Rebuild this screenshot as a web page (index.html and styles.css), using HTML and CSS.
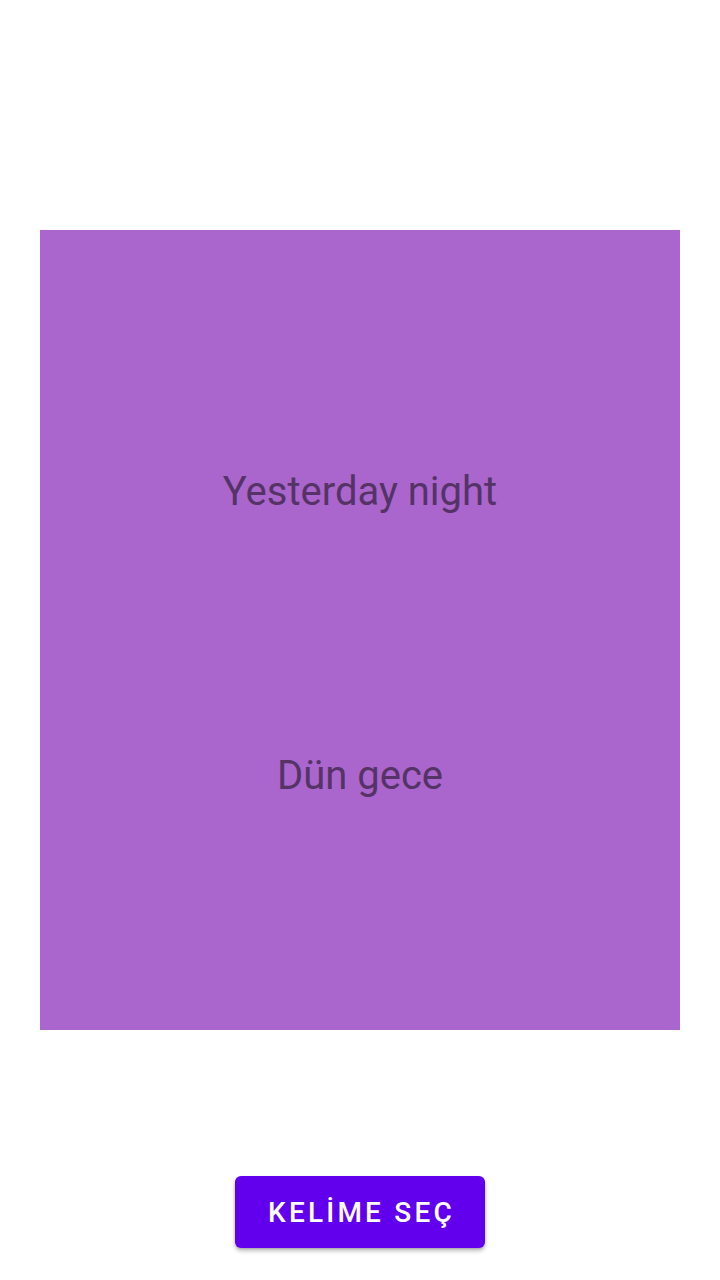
FILE: index.html
```html
<!DOCTYPE html>
<html lang="tr">
<head>
<meta charset="utf-8">
<link rel="stylesheet" href="styles.css">
</head>
<body>
<main class="screen">
  <section class="card">
    <p class="word word-en">Yesterday night</p>
    <p class="word word-tr">Dün gece</p>
  </section>
  <button class="pick">KELİME SEÇ</button>
</main>
</body>
</html>
```
FILE: styles.css
```css
html, body {
  margin: 0;
  padding: 0;
  background: #ffffff;
}
.screen {
  width: 720px;
  height: 1280px;
  display: flex;
  flex-direction: column;
  align-items: center;
  padding-top: 230px;
  box-sizing: border-box;
  font-family: Roboto, "Noto Sans", sans-serif;
}
.card {
  width: 640px;
  height: 800px;
  background: #aa66cc;
  display: flex;
  flex-direction: column;
  align-items: center;
  padding-top: 238px;
  box-sizing: border-box;
}
.word {
  margin: 0;
  font-size: 40px;
  line-height: 47px;
  color: #553366;
  font-weight: 400;
}
.word-tr {
  margin-top: 237px;
}
.pick {
  margin-top: 146px;
  width: 250px;
  height: 72px;
  background: #6200ee;
  color: #ffffff;
  border: none;
  border-radius: 6px;
  font-family: Roboto, "Noto Sans", sans-serif;
  font-weight: 500;
  font-size: 28px;
  letter-spacing: 3.2px;
  padding: 0 0 0 3px;
  box-shadow: 0 3px 4px rgba(0,0,0,0.25), 0 1px 2px rgba(0,0,0,0.15);
}
```
